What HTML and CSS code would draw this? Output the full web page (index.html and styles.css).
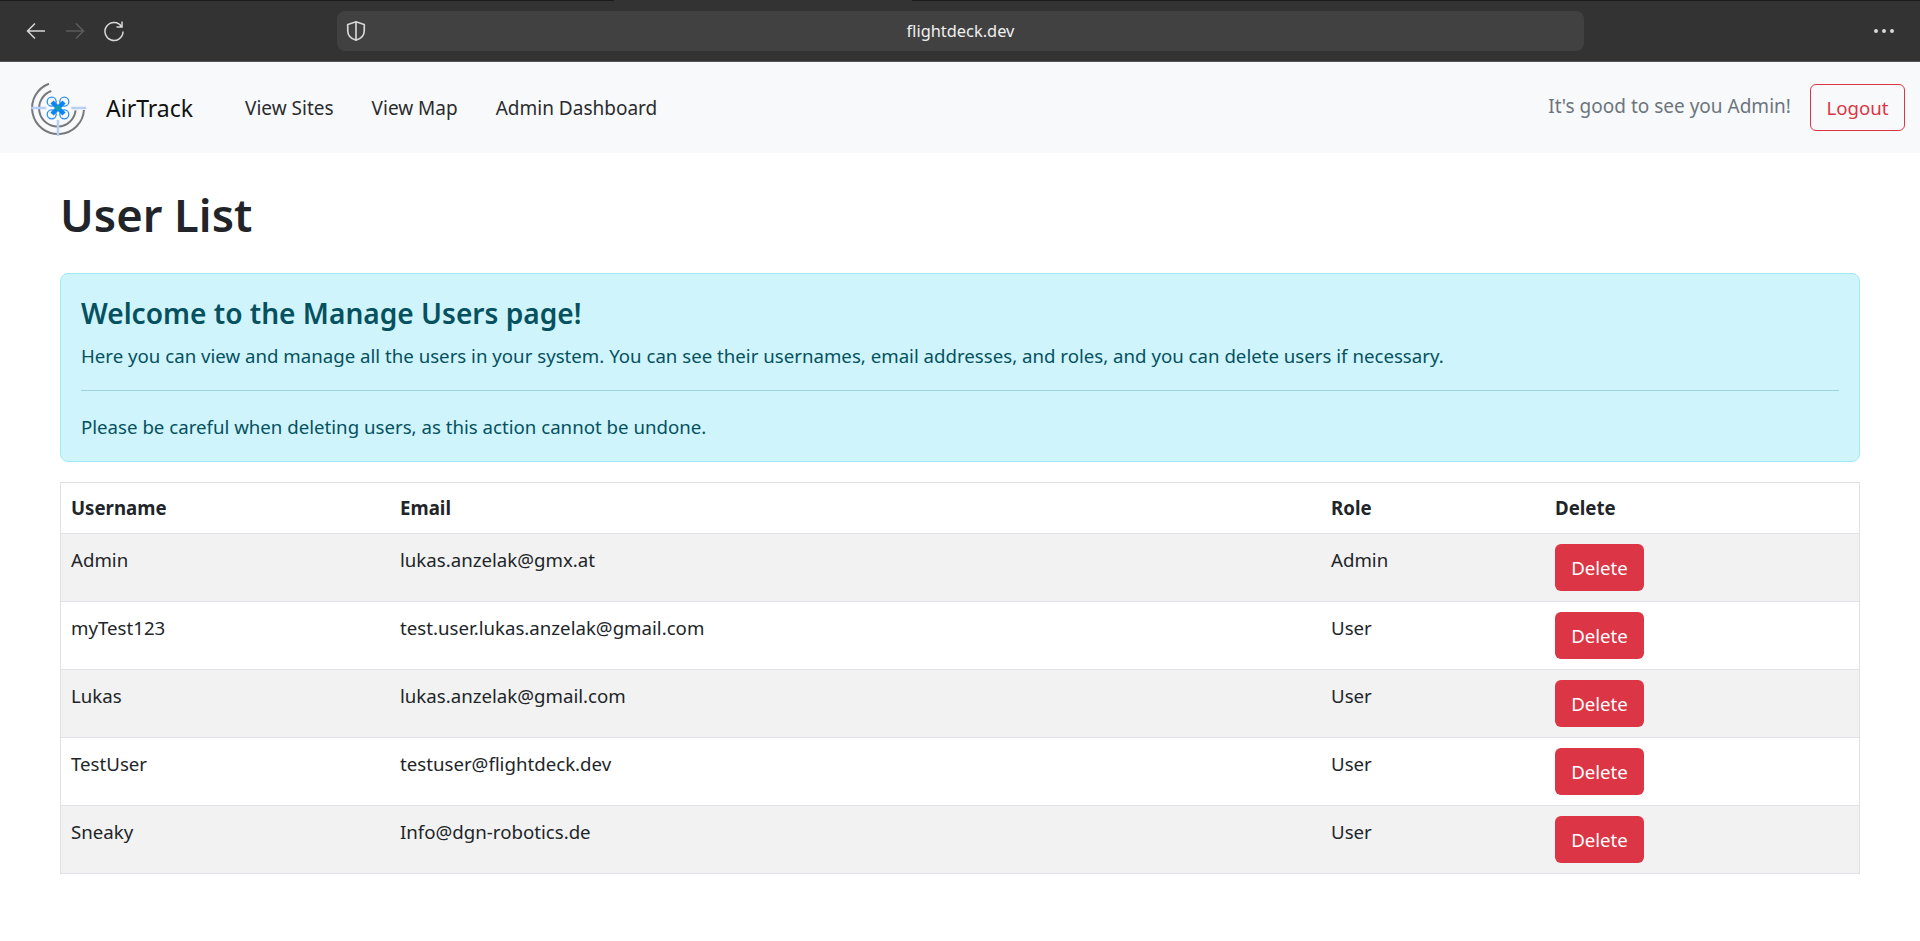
FILE: index.html
```html
<!DOCTYPE html>
<html lang="en">
<head>
    <meta charset="UTF-8">
    <meta name="viewport" content="width=device-width, initial-scale=1.0">
    <title>User List</title>
    <link rel="stylesheet" href="styles.css">
</head>
<body>
    <div class="chrome">
        <div class="chrome-nav">
            <svg class="chrome-icon" viewBox="0 0 24 24"><path d="M21 12H4M11 4.500L3.500 12L11 19.500"/></svg>
            <svg class="chrome-icon chrome-icon-off" viewBox="0 0 24 24"><path d="M3 12H20M13 4.500L20.500 12L13 19.500"/></svg>
            <svg class="chrome-icon" viewBox="0 0 24 24"><path d="M19.500 7.500A9 9 0 1 0 21 12.500M20 2.500V8H14.500"/></svg>
        </div>
        <div class="urlbar">
            <svg class="shield" viewBox="0 0 24 24"><path d="M12 2L21 5V12C21 17 17 20.500 12 22C7 20.500 3 17 3 12V5ZM12 2V22"/></svg>
            <span class="url">flightdeck.dev</span>
        </div>
        <div class="chrome-more"><span></span><span></span><span></span></div>
    </div>

    <nav class="navbar">
        <svg class="logo" viewBox="0 0 60 60">
            <path class="ring" d="M21 5.700A26 26 0 1 0 56 32"/>
            <path class="ring" d="M23.300 13A18.300 18.300 0 1 0 47.600 32.300"/>
            <path class="cross" d="M3.300 30H18.300M43.300 30H58.300M30 42V58"/>
            <circle class="rotor" cx="23.700" cy="23.700" r="4.500"/>
            <circle class="rotor" cx="36.300" cy="23.700" r="4.500"/>
            <circle class="rotor" cx="23.700" cy="36.300" r="4.500"/>
            <circle class="rotor" cx="36.300" cy="36.300" r="4.500"/>
            <path class="arms" d="M24 24L36 36M36 24L24 36"/>
            <circle class="core" cx="30" cy="30" r="2.500"/>
        </svg>
        <a class="brand" href="#">AirTrack</a>
        <ul class="nav-links">
            <li><a href="#">View Sites</a></li>
            <li><a href="#">View Map</a></li>
            <li><a href="#">Admin Dashboard</a></li>
        </ul>
        <span class="greeting">It's good to see you Admin!</span>
        <a class="btn-logout" href="#">Logout</a>
    </nav>

    <div class="container">
        <h1>User List</h1>

        <div class="alert">
            <h4>Welcome to the Manage Users page!</h4>
            <p>Here you can view and manage all the users in your system. You can see their usernames, email addresses, and roles, and you can delete users if necessary.</p>
            <hr>
            <p>Please be careful when deleting users, as this action cannot be undone.</p>
        </div>

        <table class="users">
            <thead>
                <tr>
                    <th class="col-name">Username</th>
                    <th class="col-email">Email</th>
                    <th class="col-role">Role</th>
                    <th>Delete</th>
                </tr>
            </thead>
            <tbody>
                <tr>
                    <td>Admin</td>
                    <td>lukas.anzelak@gmx.at</td>
                    <td>Admin</td>
                    <td class="cell-action"><button class="btn-delete">Delete</button></td>
                </tr>
                <tr>
                    <td>myTest123</td>
                    <td>test.user.lukas.anzelak@gmail.com</td>
                    <td>User</td>
                    <td class="cell-action"><button class="btn-delete">Delete</button></td>
                </tr>
                <tr>
                    <td>Lukas</td>
                    <td>lukas.anzelak@gmail.com</td>
                    <td>User</td>
                    <td class="cell-action"><button class="btn-delete">Delete</button></td>
                </tr>
                <tr>
                    <td>TestUser</td>
                    <td>testuser@flightdeck.dev</td>
                    <td>User</td>
                    <td class="cell-action"><button class="btn-delete">Delete</button></td>
                </tr>
                <tr>
                    <td>Sneaky</td>
                    <td>Info@dgn-robotics.de</td>
                    <td>User</td>
                    <td class="cell-action"><button class="btn-delete">Delete</button></td>
                </tr>
            </tbody>
        </table>
    </div>
</body>
</html>
```

FILE: styles.css
```css
body {
    font-family: "Noto Sans", "Open Sans", sans-serif;
    font-size: 18.660px;
    line-height: 28px;
    color: #212529;
    background: white;
    margin: 0;
    padding: 0;
}

a {
    text-decoration: none;
}

/* browser bar */
.chrome {
    display: flex;
    align-items: center;
    height: 60px;
    background: #333333;
    border-top: 1px solid #1c1c1c;
    border-bottom: 1px solid #555555;
    position: relative;
}

/* break in the dark top line */
.chrome::before {
    content: "";
    position: absolute;
    top: -1px;
    left: 614px;
    width: 298px;
    height: 1px;
    background: #333333;
}

.chrome-nav {
    display: flex;
    gap: 15px;
    width: 337px;
    padding-left: 24px;
    box-sizing: border-box;
}

.chrome-icon {
    width: 24px;
    height: 24px;
    fill: none;
    stroke: #d8d8d8;
    stroke-width: 1.500;
}

.chrome-icon-off {
    stroke: #5c5c5c;
}

.urlbar {
    display: flex;
    align-items: center;
    width: 1247px;
    height: 40px;
    background: #414141;
    border-radius: 8px;
    position: relative;
}

.shield {
    width: 22px;
    height: 22px;
    margin-left: 8px;
    fill: none;
    stroke: #d8d8d8;
    stroke-width: 1.800;
}

.url {
    position: absolute;
    left: 0;
    right: 0;
    text-align: center;
    color: #f0f0f0;
    font-size: 16.400px;
}

.chrome-more {
    display: flex;
    gap: 4px;
    margin-left: auto;
    margin-right: 26px;
}

.chrome-more span {
    width: 4px;
    height: 4px;
    background: #d8d8d8;
    border-radius: 50%;
}

/* site navbar */
.navbar {
    display: flex;
    align-items: center;
    height: 91px;
    background: #f8f9fa;
    padding: 0 15px 0 28px;
}

.logo {
    width: 60px;
    height: 60px;
    flex-shrink: 0;
}

.ring {
    fill: none;
    stroke: #77797c;
    stroke-width: 2;
}

.cross {
    fill: none;
    stroke: #b5cff5;
    stroke-width: 2.500;
}

.rotor {
    fill: none;
    stroke: #2f8ff0;
    stroke-width: 1.300;
}

.arms {
    fill: none;
    stroke: #0d84f0;
    stroke-width: 4.500;
}

.core {
    fill: #10a5a0;
}

.brand {
    color: #111;
    font-size: 23px;
    margin-left: 18px;
}

.nav-links {
    display: flex;
    gap: 38px;
    list-style: none;
    margin: 0 0 0 52px;
    padding: 0;
}

.nav-links a {
    color: #2a2c2f;
    font-size: 19px;
}

.greeting {
    margin-left: auto;
    color: #6c757d;
    font-size: 19px;
    margin-right: 19px;
    margin-bottom: 4px;
}

.btn-logout {
    color: #dc3545;
    border: 1px solid #dc3545;
    border-radius: 6px;
    padding: 9px 15.500px 7px;
    box-sizing: border-box;
    height: 47px;
    margin-bottom: 1px;
}

/* content */
.container {
    padding: 0 60px;
}

h1 {
    font-size: 45.300px;
    font-weight: 600;
    line-height: 54px;
    margin: 35px 0 31px;
}

.alert {
    background: #cff4fc;
    border: 1px solid #9eeaf9;
    border-radius: 8px;
    color: #055160;
    padding: 22px 20px 20px;
    margin-bottom: 20px;
}

.alert h4 {
    font-size: 28.100px;
    font-weight: 600;
    line-height: 34px;
    margin: 0 0 12px;
}

.alert p {
    margin: 0;
}

.alert hr {
    border: 0;
    border-top: 1px solid #9cd3de;
    margin: 20px 0 22px;
}

.users {
    width: 100%;
    table-layout: fixed;
    border-collapse: collapse;
    border: 1px solid #dee2e6;
}

.users th,
.users td {
    text-align: left;
    vertical-align: top;
    padding: 11px 10px;
    border-bottom: 1px solid #dee2e6;
}

.users td {
    padding-top: 12px;
}

.users .cell-action {
    padding: 10px;
}

.users tbody tr:nth-child(odd) {
    background: #f2f2f2;
}

.col-name {
    width: 309px;
}

.col-email {
    width: 911px;
}

.col-role {
    width: 204px;
}

.btn-delete {
    display: block;
    font: inherit;
    color: white;
    background: #dc3545;
    border: none;
    border-radius: 6px;
    padding: 0;
    height: 47px;
    width: 89px;
    cursor: pointer;
}
```
